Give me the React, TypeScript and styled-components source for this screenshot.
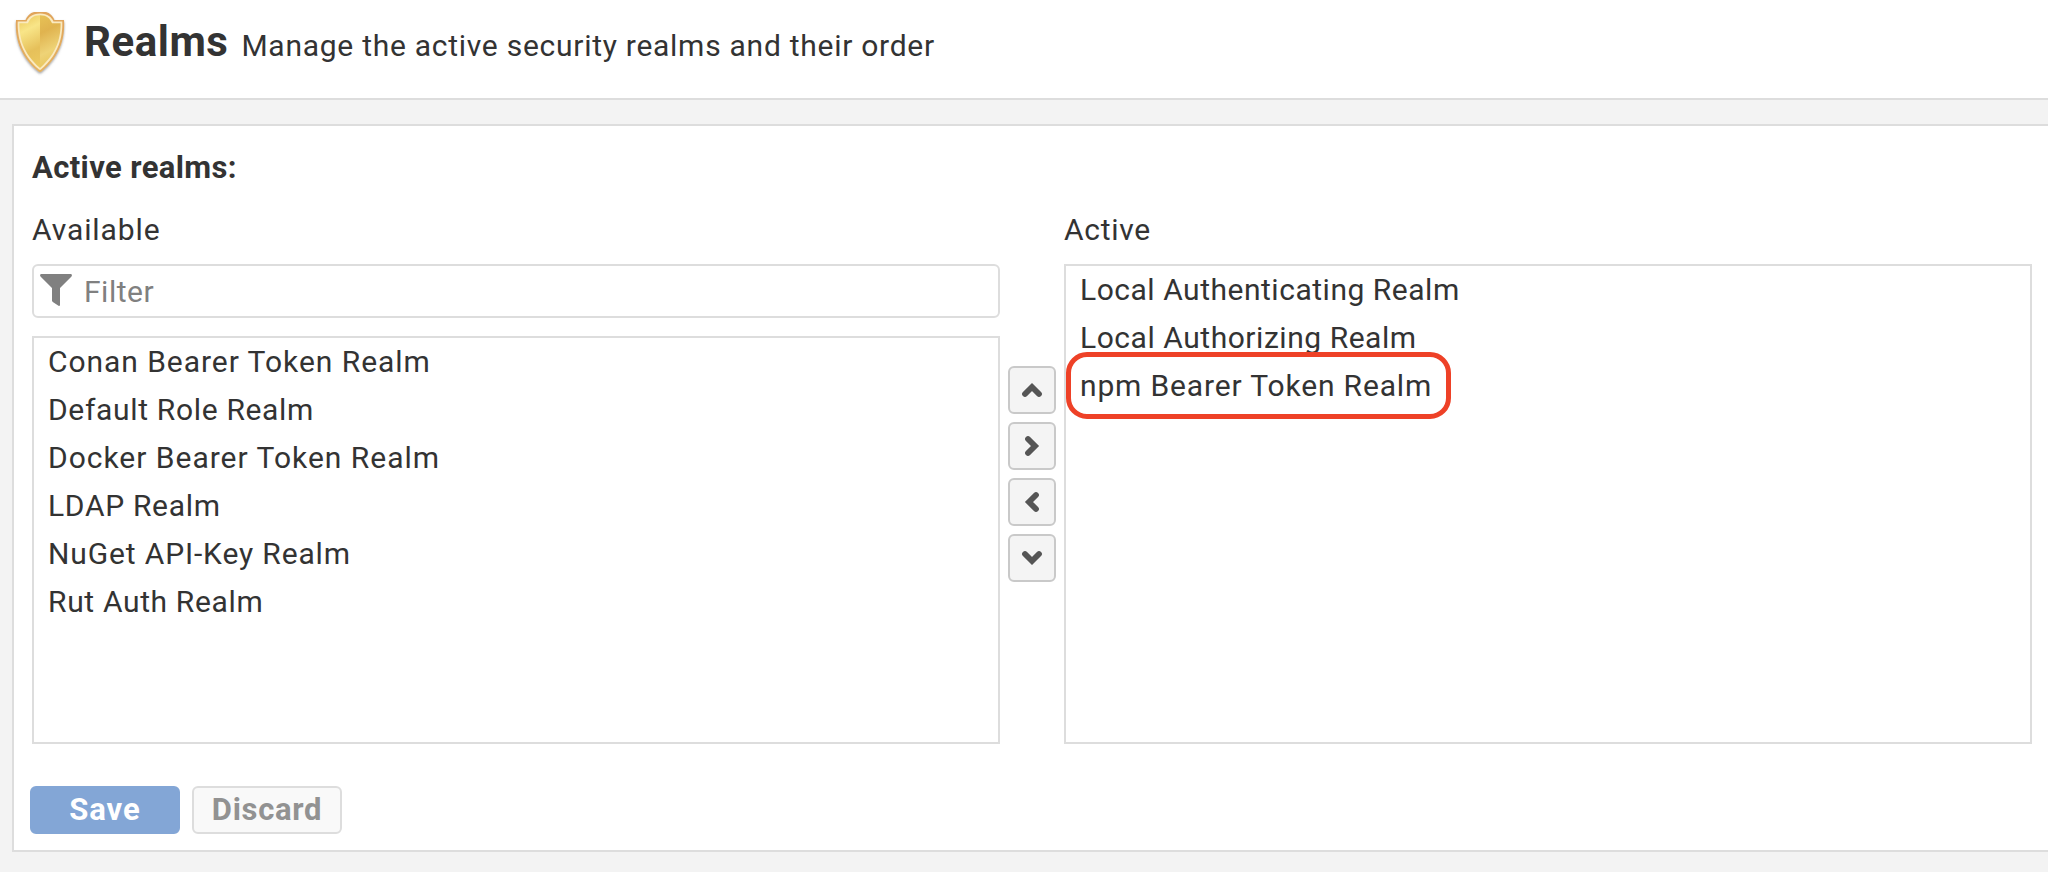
import React from 'react';
import styled, { createGlobalStyle } from 'styled-components';

const GlobalStyle = createGlobalStyle`
  * { box-sizing: border-box; }
  body {
    margin: 0;
    background: #f3f3f3;
    color: #333;
    font-family: Roboto, 'Liberation Sans', sans-serif;
    font-size: 30px;
    overflow: hidden;
  }
`;

const Page = styled.div`
  height: 872px;
  overflow: hidden;
`;

const Header = styled.header`
  display: flex;
  align-items: flex-start;
  height: 100px;
  padding: 10px 12px 0;
  background: #fff;
  border-bottom: 2px solid #ddd;
`;

const ShieldIcon = styled.svg`
  flex: none;
  width: 56px;
  height: 68px;
`;

const Heading = styled.div`
  display: flex;
  align-items: baseline;
  gap: 13px;
  padding: 8px 0 0 16px;
  line-height: 48px;
  white-space: nowrap;
`;

const Title = styled.h1`
  margin: 0;
  font-size: 42px;
  font-weight: 700;
  letter-spacing: 0.55px;
`;

const Subtitle = styled.span`
  letter-spacing: 0.73px;
`;

const Panel = styled.main`
  display: flex;
  flex-direction: column;
  height: 728px;
  margin: 24px 0 0 12px;
  padding: 24px 16px 16px 18px;
  background: #fff;
  border: 2px solid #ddd;
  border-right: 0;
`;

const SectionLabel = styled.div`
  line-height: 36px;
  font-size: 31px;
  font-weight: 700;
  letter-spacing: 0.37px;
`;

const Selector = styled.div`
  display: flex;
  height: 532px;
  margin-top: 26px;
`;

const Column = styled.section`
  display: flex;
  flex: 1;
  flex-direction: column;
  min-width: 0;
`;

const ColumnLabel = styled.div<{ $tracking: number }>`
  margin-bottom: 16px;
  line-height: 36px;
  letter-spacing: ${(p) => p.$tracking}px;
`;

const FilterBox = styled.label`
  display: flex;
  align-items: center;
  flex: none;
  height: 54px;
  margin-bottom: 18px;
  padding-left: 6px;
  border: 2px solid #ddd;
  border-radius: 6px;
`;

const FunnelIcon = styled.svg`
  flex: none;
  width: 32px;
  height: 32px;
  margin-bottom: 2px;
  fill: #808080;
`;

const FilterInput = styled.input`
  flex: 1;
  min-width: 0;
  height: 48px;
  padding: 0 0 0 12px;
  border: 0;
  outline: 0;
  background: transparent;
  color: #333;
  font: inherit;
  letter-spacing: 0.52px;
  &::placeholder { color: #808080; opacity: 1; }
`;

const List = styled.ul`
  flex: 1;
  min-height: 0;
  margin: 0;
  padding: 0;
  list-style: none;
  border: 2px solid #ddd;
`;

const Item = styled.li<{ $tracking: number }>`
  position: relative;
  height: 48px;
  padding-left: 14px;
  line-height: 48px;
  letter-spacing: ${(p) => p.$tracking}px;
  white-space: nowrap;
`;

const Highlight = styled.span`
  position: absolute;
  top: -10px;
  left: 0;
  width: 385px;
  height: 67px;
  border: 5px solid #ee4127;
  border-radius: 21px;
`;

const Movers = styled.div`
  display: flex;
  flex-direction: column;
  gap: 8px;
  width: 64px;
  padding: 154px 8px 0;
`;

const MoveButton = styled.button`
  display: block;
  width: 48px;
  height: 48px;
  padding: 0;
  background: #f4f4f4;
  border: 2px solid #c9c9c9;
  border-radius: 6px;
`;

const Chevron = styled.svg<{ $turn: number }>`
  display: block;
  width: 44px;
  height: 44px;
  fill: none;
  stroke: #555;
  stroke-width: 5.8;
  stroke-linecap: round;
  transform: rotate(${(p) => p.$turn}deg);
`;

const Actions = styled.div`
  display: flex;
  gap: 12px;
  margin: 42px 0 0 -2px;
`;

const ActionButton = styled.button<{ $primary?: boolean }>`
  width: 150px;
  height: 48px;
  padding: 0;
  font: inherit;
  font-size: 31px;
  font-weight: 700;
  line-height: 44px;
  letter-spacing: ${(p) => (p.$primary ? 0.98 : 0.69)}px;
  color: ${(p) => (p.$primary ? '#fff' : '#929292')};
  background: ${(p) => (p.$primary ? '#83a6d6' : '#f9f9f9')};
  border: 2px solid ${(p) => (p.$primary ? '#83a6d6' : '#ddd')};
  border-radius: 6px;
`;

type Realm = { name: string; tracking: number; highlighted?: boolean };

const available: Realm[] = [
  { name: 'Conan Bearer Token Realm', tracking: 0.95 },
  { name: 'Default Role Realm', tracking: 0.67 },
  { name: 'Docker Bearer Token Realm', tracking: 0.99 },
  { name: 'LDAP Realm', tracking: 0.69 },
  { name: 'NuGet API-Key Realm', tracking: 0.86 },
  { name: 'Rut Auth Realm', tracking: 0.65 },
];

const active: Realm[] = [
  { name: 'Local Authenticating Realm', tracking: 0.52 },
  { name: 'Local Authorizing Realm', tracking: 0.54 },
  { name: 'npm Bearer Token Realm', tracking: 0.84, highlighted: true },
];

const moves = [
  { label: 'Move up', turn: 0 },
  { label: 'Add', turn: 90 },
  { label: 'Remove', turn: -90 },
  { label: 'Move down', turn: 180 },
];

function RealmList({ realms }: { realms: Realm[] }) {
  return (
    <List>
      {realms.map((r) => (
        <Item key={r.name} $tracking={r.tracking}>
          {r.name}
          {r.highlighted && <Highlight />}
        </Item>
      ))}
    </List>
  );
}

function Shield() {
  return (
    <ShieldIcon viewBox="12 10 56 68" aria-hidden="true">
      <defs>
        <linearGradient id="rim" x1="0" y1="0" x2="0" y2="1">
          <stop offset="0" stopColor="#e0a45a" />
          <stop offset="1" stopColor="#e5b260" />
        </linearGradient>
        <linearGradient id="leftFace" x1="0.6" y1="0" x2="0.8" y2="1">
          <stop offset="0" stopColor="#efd068" />
          <stop offset="0.22" stopColor="#f8e588" />
          <stop offset="0.65" stopColor="#e6c05a" />
          <stop offset="1" stopColor="#ecca60" />
        </linearGradient>
        <linearGradient id="rightFace" x1="0.2" y1="0" x2="0.4" y2="1">
          <stop offset="0" stopColor="#e6c055" />
          <stop offset="0.3" stopColor="#e0b34f" />
          <stop offset="0.7" stopColor="#eed377" />
          <stop offset="1" stopColor="#e8c45a" />
        </linearGradient>
        <filter id="drop" x="-20%" y="-20%" width="140%" height="140%">
          <feDropShadow dx="0" dy="1.5" stdDeviation="1.2" floodColor="#555" floodOpacity="0.55" />
        </filter>
      </defs>
      <path filter="url(#drop)" fill="url(#rim)" d="M16 20H25.5C27 16 30 13 34 12H46C50 13 53 16 54.500 20H64C65 37 61 55 42 71Q40 73 38 71C19 55 15 37 16 20Z" />
      <path fill="#faeac0" d="M17.700 21.500H26.500C28.500 17 32 13.700 40 13.500C48 13.700 51.500 17 53.500 21.500H62.300C62.800 37 59 54 41 69.600Q40 70.500 39 69.600C21 54 17.200 37 17.700 21.500Z" />
      <path fill="url(#leftFace)" d="M40 15.300C33 15.300 30.200 18.500 28 23.300H19.400C19.300 38 23 53 40 68Z" />
      <path fill="url(#rightFace)" d="M40 15.300C47 15.300 49.800 18.500 52 23.300H60.600C60.700 38 57 53 40 68Z" />
    </ShieldIcon>
  );
}

export default function App() {
  return (
    <Page>
      <GlobalStyle />
      <Header>
        <Shield />
        <Heading>
          <Title>Realms</Title>
          <Subtitle>Manage the active security realms and their order</Subtitle>
        </Heading>
      </Header>
      <Panel>
        <SectionLabel>Active realms:</SectionLabel>
        <Selector>
          <Column>
            <ColumnLabel $tracking={0.9}>Available</ColumnLabel>
            <FilterBox>
              <FunnelIcon viewBox="0 0 32 32" aria-hidden="true">
                <path d="M1 0H31Q32.600 0.800 31.500 2.400L20 14V31Q19.800 32.300 18.500 31.800L12.800 28Q12 27.400 12 26.500V14L0.500 2.400Q-0.600 0.800 1 0Z" />
              </FunnelIcon>
              <FilterInput placeholder="Filter" />
            </FilterBox>
            <RealmList realms={available} />
          </Column>
          <Movers>
            {moves.map((m) => (
              <MoveButton key={m.label} aria-label={m.label}>
                <Chevron $turn={m.turn} viewBox="0 0 44 44">
                  <path d="M15 26L22 19L29 26" />
                </Chevron>
              </MoveButton>
            ))}
          </Movers>
          <Column>
            <ColumnLabel $tracking={0.72}>Active</ColumnLabel>
            <RealmList realms={active} />
          </Column>
        </Selector>
        <Actions>
          <ActionButton $primary>Save</ActionButton>
          <ActionButton>Discard</ActionButton>
        </Actions>
      </Panel>
    </Page>
  );
}
